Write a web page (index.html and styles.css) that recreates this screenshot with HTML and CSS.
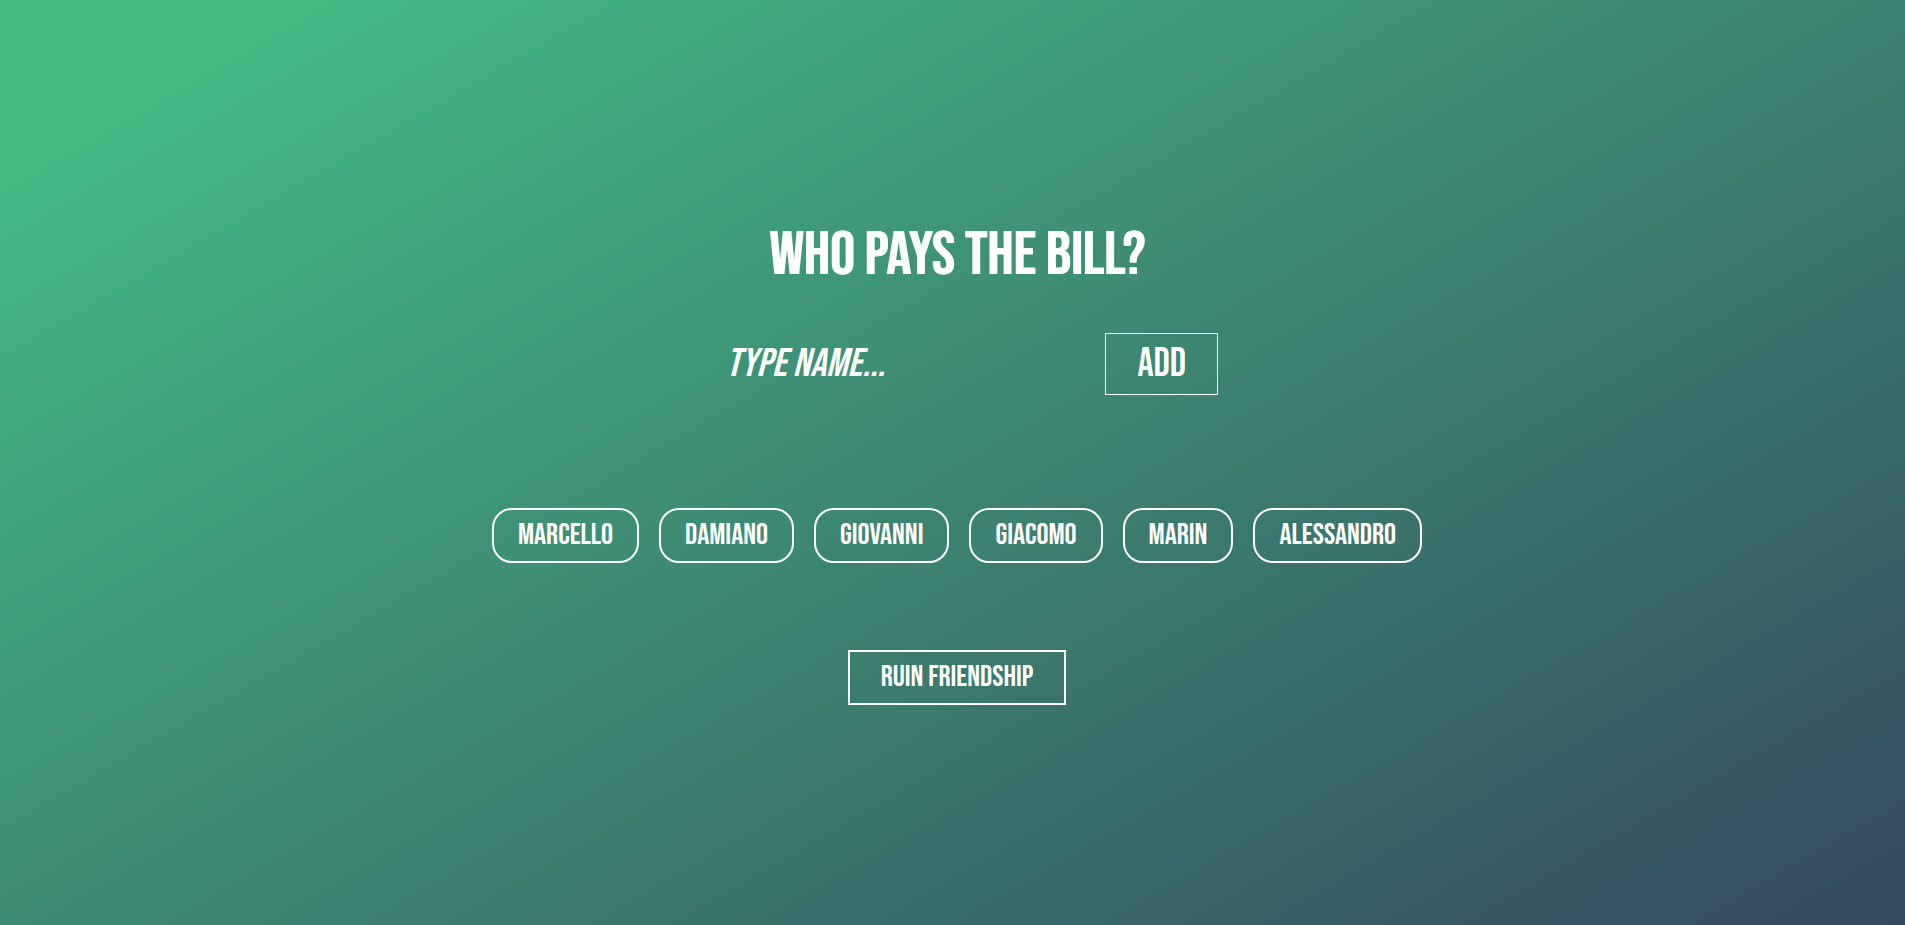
FILE: index.html
```html
<!DOCTYPE html>
<html lang="en">
<head>
  <meta charset="utf-8">
  <meta name="viewport" content="width=device-width, initial-scale=1">
  <title>Who pays the bill?</title>
  <link rel="stylesheet" href="styles.css">
</head>
<body>
  <main class="app">
    <h1 class="title">WHO PAYS THE BILL?</h1>
    <form class="entry">
      <input class="entry-input" type="text" aria-label="Name" placeholder="TYPE NAME...">
      <button class="entry-add" type="button">ADD</button>
    </form>
    <ul class="names">
      <li class="name">MARCELLO</li>
      <li class="name">DAMIANO</li>
      <li class="name">GIOVANNI</li>
      <li class="name">GIACOMO</li>
      <li class="name">MARIN</li>
      <li class="name">ALESSANDRO</li>
    </ul>
    <button class="ruin" type="button">RUIN FRIENDSHIP</button>
  </main>
</body>
</html>
```

FILE: styles.css
```css
* {
  box-sizing: border-box;
}

body {
  margin: 0;
  min-height: 100vh;
  background: linear-gradient(150deg, #43b984 9%, #35495e 100%);
  color: #fff;
  font-family: "Bebas Neue", "Liberation Sans Narrow", sans-serif;
  font-weight: 400;
}

.app {
  display: flex;
  flex-direction: column;
  align-items: center;
  padding: 216px 0 40px 9px;
}

.title {
  margin: 0;
  font-size: 62px;
  font-weight: 400;
  line-height: 80px;
  text-shadow: 1px 0 #fff;
}

.entry {
  display: flex;
  align-items: center;
  justify-content: space-between;
  width: 492px;
  margin-top: 37px;
  margin-left: 30px;
}

.entry-input {
  flex: 1;
  min-width: 0;
  padding: 0;
  border: 0;
  background: none;
  color: inherit;
  font: inherit;
  font-size: 40px;
  line-height: 48px;
  outline: none;
}

.entry-input::placeholder {
  color: #fff;
  font-style: italic;
  opacity: 1;
}

.entry-add {
  padding: 0 31px;
  border: 1px solid #fff;
  background: none;
  color: inherit;
  font: inherit;
  font-size: 40px;
  line-height: 60px;
}

.names {
  display: flex;
  flex-wrap: wrap;
  justify-content: center;
  gap: 20px;
  margin: 113px 0 0;
  padding: 0;
  list-style: none;
}

.name {
  padding: 0 24px;
  border: 2px solid #fff;
  border-radius: 20px;
  font-size: 30px;
  line-height: 51px;
}

.ruin {
  margin-top: 87px;
  padding: 0 31px;
  border: 2px solid #fff;
  background: none;
  color: inherit;
  font: inherit;
  font-size: 30px;
  line-height: 51px;
}
```
